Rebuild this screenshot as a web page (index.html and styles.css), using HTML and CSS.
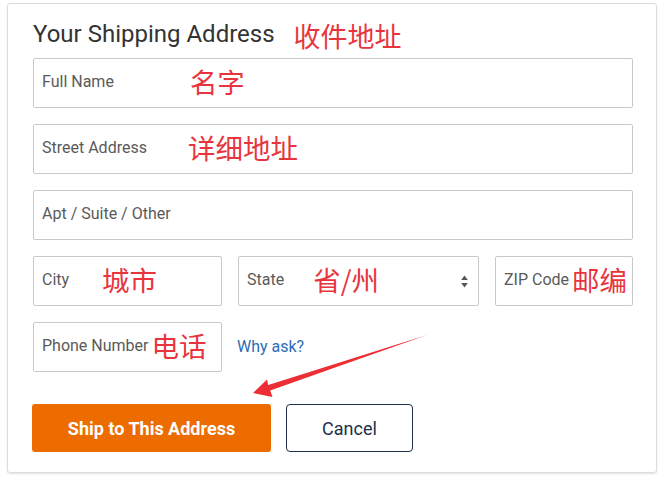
FILE: index.html
```html
<!DOCTYPE html>
<html lang="en">
<head>
<meta charset="utf-8">
<title>Your Shipping Address</title>
<link rel="stylesheet" href="styles.css">
</head>
<body>
<div class="card">
  <div class="title-row">
    <h1 class="title">Your Shipping Address</h1>
    <span class="note note-title">收件地址</span>
  </div>
  <div class="fields">
    <div class="field"><span class="label">Full Name</span><span class="note note-name">名字</span></div>
    <div class="field"><span class="label">Street Address</span><span class="note note-street">详细地址</span></div>
    <div class="field"><span class="label">Apt / Suite / Other</span></div>
    <div class="row3">
      <div class="field"><span class="label">City</span><span class="note note-city">城市</span></div>
      <div class="field select"><span class="label">State</span><span class="note note-state">省/州</span>
        <svg class="spinner" width="7" height="13" viewBox="0 0 7 13"><path d="M3.5 0.5 L6.8 5 L0.2 5 Z M3.5 12.5 L6.8 8 L0.2 8 Z" fill="#555"/></svg>
      </div>
      <div class="field zip"><span class="label">ZIP Code</span><span class="note note-zip">邮编</span></div>
    </div>
    <div class="phone-row">
      <div class="field phone"><span class="label">Phone Number</span><span class="note note-phone">电话</span></div>
      <a class="why" href="#">Why ask?</a>
    </div>
  </div>
  <div class="actions">
    <button class="btn btn-primary" type="button">Ship to This Address</button>
    <button class="btn btn-cancel" type="button">Cancel</button>
  </div>
</div>
<svg class="arrow" width="664" height="480" viewBox="0 0 664 480">
  <polygon points="253,393 267,379.5 268.2,385 427,335 270.2,390.6 272.5,397" fill="#ec2f35"/>
</svg>
</body>
</html>
```
FILE: styles.css
```css
* { box-sizing: border-box; }
html, body { margin: 0; padding: 0; background: #fff; }
body {
  font-family: Roboto, "Liberation Sans", Arial, sans-serif;
  width: 664px;
  height: 480px;
  position: relative;
  overflow: hidden;
}
.card {
  margin: 3px 0 0 7px;
  width: 650px;
  height: 470px;
  border: 1px solid #dcdcdc;
  border-radius: 3px;
  box-shadow: 0 1px 2px rgba(0,0,0,0.12);
  padding: 16px 23px 20px 25px;
}
.title-row {
  display: flex;
  align-items: flex-start;
  height: 30px;
  margin-bottom: 8px;
}
.title {
  margin: 0;
  font-size: 24px;
  line-height: 28px;
  font-weight: 400;
  color: #333;
}
.note {
  font-family: "Noto Sans CJK SC", sans-serif;
  color: #e8353d;
  font-size: 27.5px;
  line-height: 27px;
  white-space: nowrap;
}
.note-title { margin-left: 19px; margin-top: 2px; font-size: 27px; }
.fields {
  display: flex;
  flex-direction: column;
  gap: 16px;
}
.field {
  height: 50px;
  min-width: 0;
  border: 1px solid #c9c9c9;
  border-radius: 2px;
  display: flex;
  align-items: center;
  padding: 0 8px 3px 8px;
  position: relative;
}
.label {
  font-size: 16px;
  color: #5a5a5a;
  white-space: nowrap;
}
.note-name { margin-left: 76px; }
.note-street { margin-left: 41px; }
.note-city { margin-left: 33px; }
.note-state { margin-left: 29px; }
.note-zip { margin-left: 3px; }
.note-phone { margin-left: 3px; }
.row3 {
  display: grid;
  grid-template-columns: 189px 241px minmax(0, 1fr);
  gap: 16px;
}
.zip { padding-right: 0; }
.select { padding-right: 10px; }
.spinner { margin-left: auto; margin-top: 3px; }
.phone-row {
  display: flex;
  align-items: center;
  gap: 15px;
}
.phone { width: 189px; }
.why {
  color: #2d6cb5;
  font-size: 16px;
  text-decoration: none;
  margin-top: -2px;
}
.actions {
  display: flex;
  gap: 15px;
  margin-top: 32px;
}
.btn {
  height: 48px;
  font-family: Roboto, "Liberation Sans", Arial, sans-serif;
  font-size: 18px;
  border-radius: 3px;
  cursor: pointer;
}
.btn-primary {
  width: 239px;
  background: #ec6c00;
  border: none;
  color: #fff;
  font-weight: 700;
  margin-left: -1px;
}
.btn-cancel {
  width: 127px;
  background: #fff;
  border: 1px solid #1c2f4d;
  color: #1c2f4d;
  font-weight: 400;
  border-radius: 4px;
}
.arrow {
  position: absolute;
  left: 0;
  top: 0;
  pointer-events: none;
}
```
